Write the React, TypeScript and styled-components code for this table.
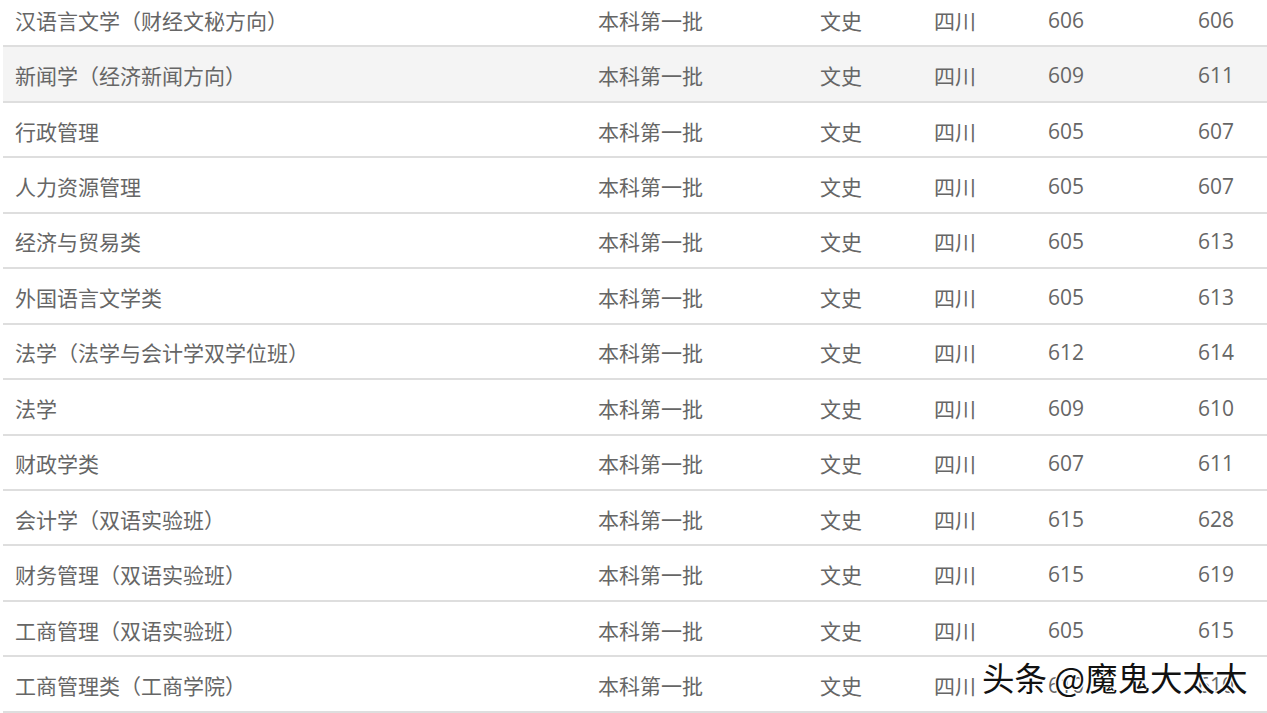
import React from "react";
import styled, { createGlobalStyle } from "styled-components";

const GlobalStyle = createGlobalStyle`
    html, body {
        margin: 0;
        padding: 0;
        background: #fff;
        overflow: hidden;
    }
    body {
        font-family: "Noto Sans CJK SC", "Open Sans", sans-serif;
    }
`

const Page = styled.div`
    position: relative;
    width: 1267px;
    height: 713px;
    overflow: hidden;
`

const Table = styled.div`
    margin: -8px 0 0 3px;
    display: flex;
    flex-direction: column;
`

const Row = styled.div<{ $shaded?: boolean }>`
    display: grid;
    grid-template-columns: 583px 222px 114px 114px 150px 1fr;
    align-items: center;
    height: 55.45px;
    box-sizing: border-box;
    padding-top: 3px;
    border-bottom: 2px solid #dedede;
    background: ${p => (p.$shaded ? "#f4f4f4" : "#fff")};
`

const Cell = styled.div`
    padding-left: 12px;
    font-size: 21px;
    color: #666;
    white-space: nowrap;
    line-height: 1;
`

const Num = styled(Cell)`
    font-family: "Open Sans", "Noto Sans CJK SC", sans-serif;
`

const Watermark = styled.div`
    position: absolute;
    left: 982px;
    top: 659px;
    font-family: "Noto Sans CJK SC", sans-serif;
    font-size: 32.5px;
    line-height: 1.1;
    color: #111;
    white-space: nowrap;
    text-shadow: 1px 1px 0 #fff, -1px -1px 0 #fff, 1px -1px 0 #fff, -1px 1px 0 #fff;
`

const rows: [string, string, string][] = [
    ["汉语言文学（财经文秘方向）", "606", "606"],
    ["新闻学（经济新闻方向）", "609", "611"],
    ["行政管理", "605", "607"],
    ["人力资源管理", "605", "607"],
    ["经济与贸易类", "605", "613"],
    ["外国语言文学类", "605", "613"],
    ["法学（法学与会计学双学位班）", "612", "614"],
    ["法学", "609", "610"],
    ["财政学类", "607", "611"],
    ["会计学（双语实验班）", "615", "628"],
    ["财务管理（双语实验班）", "615", "619"],
    ["工商管理（双语实验班）", "605", "615"],
    ["工商管理类（工商学院）", "610", "610"],
];

export default function App() {
    return (
        <Page>
            <GlobalStyle />
            <Table>
                {rows.map(([major, low, high], i) => (
                    <Row key={i} $shaded={i === 1}>
                        <Cell>{major}</Cell>
                        <Cell>本科第一批</Cell>
                        <Cell>文史</Cell>
                        <Cell>四川</Cell>
                        <Num>{low}</Num>
                        <Num>{high}</Num>
                    </Row>
                ))}
            </Table>
            <Watermark>头条 @魔鬼大太太</Watermark>
        </Page>
    );
}
